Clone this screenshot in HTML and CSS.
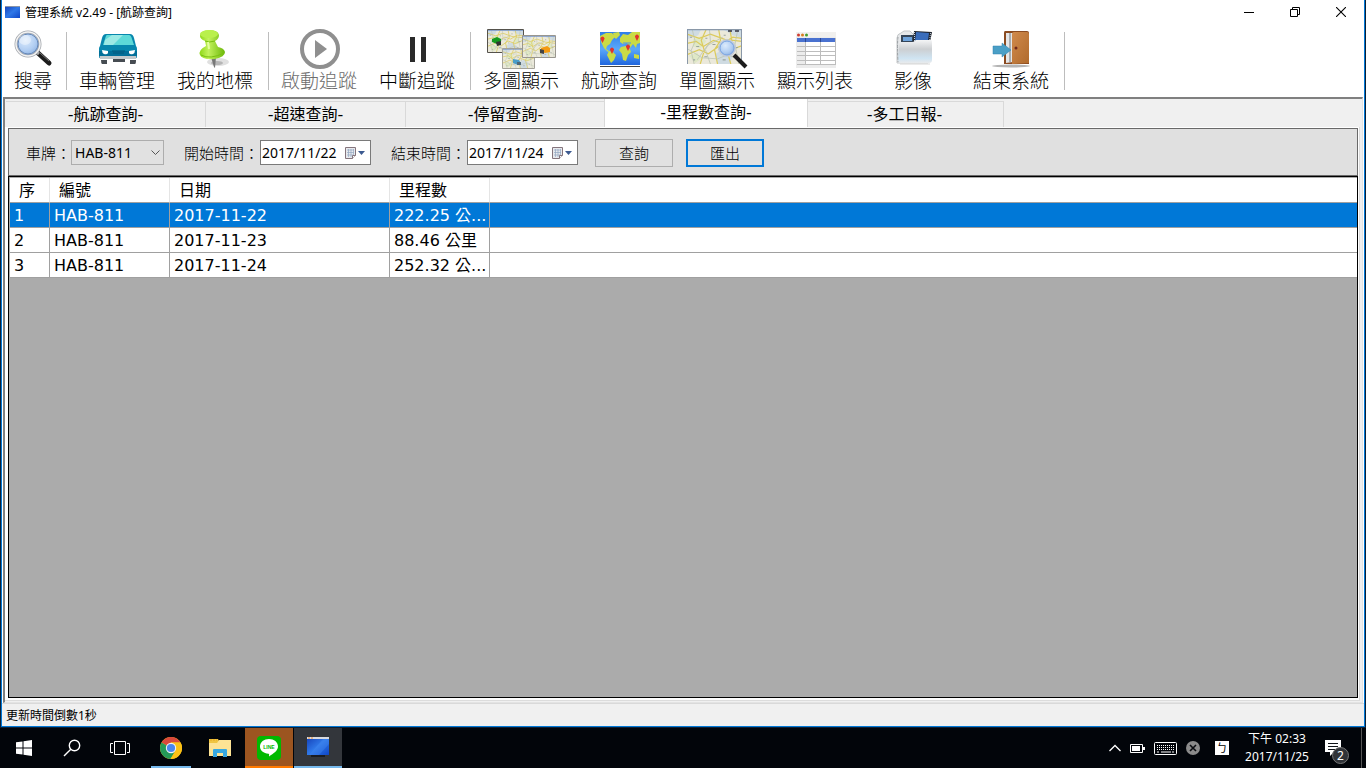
FILE: index.html
```html
<!DOCTYPE html>
<html lang="zh-TW">
<head>
    <meta charset="UTF-8">
    <meta name="viewport" content="width=device-width, initial-scale=1.0">
    <title>管理系統 v2.49 - [航跡查詢]</title>
    <link rel="stylesheet" href="styles.css">
</head>
<body>
    <!-- 共用圖形 -->
    <svg class="defs" width="0" height="0" aria-hidden="true">
        <defs>
            <linearGradient id="blueScreen" x1="0" y1="0" x2="1" y2="1">
                <stop offset="0" stop-color="#1440b8"/>
                <stop offset="0.5" stop-color="#2f78e8"/>
                <stop offset="1" stop-color="#0e46c8"/>
            </linearGradient>
            <radialGradient id="lens" cx="0.4" cy="0.35" r="0.7">
                <stop offset="0" stop-color="#dcebfc"/>
                <stop offset="0.6" stop-color="#b0cdf2"/>
                <stop offset="1" stop-color="#86abdc"/>
            </radialGradient>
            <linearGradient id="pin" x1="0" y1="0" x2="1" y2="0">
                <stop offset="0" stop-color="#8fd818"/>
                <stop offset="0.35" stop-color="#c2f25c"/>
                <stop offset="1" stop-color="#6cb80a"/>
            </linearGradient>
            <linearGradient id="sea" x1="0" y1="0" x2="0" y2="1">
                <stop offset="0" stop-color="#2f7ee8"/>
                <stop offset="0.5" stop-color="#5aa8fa"/>
                <stop offset="1" stop-color="#1c62dc"/>
            </linearGradient>
            <linearGradient id="folder" x1="0" y1="0" x2="0" y2="1">
                <stop offset="0" stop-color="#f4f5f6"/>
                <stop offset="0.4" stop-color="#cccfd2"/>
                <stop offset="0.8" stop-color="#cfe4f2"/>
                <stop offset="1" stop-color="#e8eaec"/>
            </linearGradient>
            <linearGradient id="door" x1="0" y1="0" x2="1" y2="1">
                <stop offset="0" stop-color="#d08a4c"/>
                <stop offset="1" stop-color="#b06a2c"/>
            </linearGradient>
            <symbol id="map" viewBox="0 0 54 34" preserveAspectRatio="none">
                <rect width="54" height="34" fill="#ebe9db"/>
                <path d="M0 0h14l-3 6-11 4zM35 0h19v9l-9-3zM28 24l9-5 8 6-3 9H30z" fill="#cfdbe2"/>
                <path d="M6 10l8-3 5 5-6 7-7-2zM40 12l8 1-2 9-7-3zM2 26l8-3 4 6-6 4z" fill="#dfe8c6"/>
                <path d="M0 14l9-2 7 5 10-6 9 3 10-6 9 1M0 25l12-5 9 4 10-7 11 4 12-5M13 34l4-13-3-10 5-11M30 34l-3-14 6-9-2-11M43 34l-4-14 5-9-2-11M0 5l12 4 11-4 14 5 17 2" fill="none" stroke="#dccb5c" stroke-width="1.2"/>
                <path d="M0 19l15 9 15 1 10-4 14 6M5 0l3 12-4 9 3 13M22 0l1 12-5 8 5 14M50 0l-3 15 4 19M10 30l10-14 15-8" fill="none" stroke="#bdc5b2" stroke-width="0.8"/>
                <path d="M3 8h2M9 17h3M18 9h2M25 15h3M36 6h2M47 18h3M35 30h3M17 27h3M31 20h2M6 30h2M45 27h2" stroke="#9aa49e"/>
                <path d="M0 .5h54" stroke="#7896c8" stroke-width="1.5"/>
            </symbol>
            <symbol id="calendar" viewBox="0 0 20 12">
                <path d="M.5.5h10v8l-3 3h-7z" fill="#e8eaee" stroke="#84747c"/>
                <path d="M2 3h7M2 5.5h7M2 8h6M3.5 2v8M6 2v8M8.5 2v6" stroke="#93a7c2" stroke-width="0.7"/>
                <path d="M7.500 11.500v-3h3" fill="#fff" stroke="#84747c"/>
                <path d="M13 4h7l-3.500 4z" fill="#3c5a90"/>
            </symbol>
        </defs>
    </svg>

    <main class="window">
        <header class="titlebar">
            <svg class="title-icon" width="15" height="12" viewBox="0 0 15 12" aria-hidden="true">
                <rect width="15" height="12" fill="url(#blueScreen)"/>
                <path d="M0 .5h15" stroke="#8a94a8"/>
            </svg>
            <h1 class="title">管理系統 v2.49 - [航跡查詢]</h1>
            <div class="window-controls">
                <button type="button" aria-label="最小化">
                    <svg width="10" height="10" viewBox="0 0 10 10"><path d="M0 5.500h10" stroke="#000"/></svg>
                </button>
                <button type="button" aria-label="還原">
                    <svg width="10" height="10" viewBox="0 0 10 10" fill="none" stroke="#000"><path d="M.5 2.500h7v7h-7zM2.500 2.500v-2h7v7h-2"/></svg>
                </button>
                <button type="button" aria-label="關閉">
                    <svg width="10" height="10" viewBox="0 0 10 10"><path d="M0 0l10 10M10 0L0 10" stroke="#000" stroke-width="1.1"/></svg>
                </button>
            </div>
        </header>

        <nav class="toolbar" aria-label="工具列">
            <button type="button" class="tool tool-small">
                <svg width="42" height="40" viewBox="0 0 42 40">
                    <path d="M26 24l11 10" stroke="#1c1c1c" stroke-width="5" stroke-linecap="round"/>
                    <path d="M28 24l9 8" stroke="#777" stroke-width="1"/>
                    <path d="M22 21l5 4" stroke="#aaa" stroke-width="3"/>
                    <circle cx="16" cy="15" r="12" fill="url(#lens)" stroke="#a4a8ae" stroke-width="3"/>
                    <circle cx="16" cy="15" r="12" fill="none" stroke="#f4f4f4" stroke-width="1.4"/>
                    <circle cx="16" cy="15" r="10" fill="none" stroke="#6688b8" stroke-width="1"/>
                    <ellipse cx="13" cy="11" rx="6" ry="5" fill="#fff" opacity="0.4"/>
                </svg>
                <span>搜尋</span>
            </button>
            <span class="divider"></span>
            <button type="button" class="tool">
                <svg width="42" height="40" viewBox="-2 0 42 40">
                    <path d="M3 31h6v4H4q-1-1-1-4zM32 31h6q0 4-1 4h-5zM15 30h12v3H15z" fill="#464c52"/>
                    <path d="M8 5h24q3 0 4 4l2 8q1 1 1 3v9H1v-9q0-2 1-3l2-8q1-4 4-4z" fill="#0787ad"/>
                    <path d="M1 22h38v5H1z" fill="#036f99"/>
                    <path d="M2 27h36q1 1 0 3H2q-1-2 0-3z" fill="#c4c9cc"/>
                    <path d="M9 6h22q2 0 3 4l2 6H5l2-6q1-4 2-4z" fill="#5dd9d8"/>
                    <path d="M14 6h11L15 16H6l1-5z" fill="#9beae5"/>
                    <path d="M4 21l6 1v2q-1 2-4 1-2-1-2-4zM37 21l-6 1v2q1 2 4 1 2-1 2-4z" fill="#fff"/>
                    <path d="M14 22h13M15 24h11" stroke="#04597c"/>
                </svg>
                <span>車輛管理</span>
            </button>
            <button type="button" class="tool">
                <svg width="42" height="40" viewBox="3 0 42 40">
                    <ellipse cx="27" cy="33" rx="11" ry="4" fill="#e0e0e0"/>
                    <ellipse cx="26" cy="34" rx="6" ry="2" fill="#b6b6b6"/>
                    <path d="M20 28l3 10 1 1 1-11z" fill="#777"/>
                    <path d="M9 26q-2-5 6-9l-1-5q-5-2-5-5 0-5 9-6 9 0 10 5 0 4-4 6l3 6q6 1 7 5 0 5-10 7-13 1-15-4z" fill="url(#pin)"/>
                    <ellipse cx="18" cy="5" rx="9" ry="4" fill="#b9f04c"/>
                    <path d="M14 12q4 2 10 0M10 26q9 5 23-2" fill="none" stroke="#78c010"/>
                    <path d="M17 13l1 7" stroke="#e4ff9e" stroke-width="2"/>
                </svg>
                <span>我的地標</span>
            </button>
            <span class="divider"></span>
            <button type="button" class="tool" disabled>
                <svg width="42" height="40" viewBox="-1 0 42 40">
                    <circle cx="21" cy="20" r="18" fill="none" stroke="#8f8f8f" stroke-width="4"/>
                    <path d="M16 11l12 9-12 9z" fill="#8f8f8f"/>
                </svg>
                <span>啟動追蹤</span>
            </button>
            <button type="button" class="tool">
                <svg width="42" height="40" viewBox="-1 0 42 40">
                    <path d="M13 8h5v25h-5zM24 8h5v25h-5z" fill="#2a2a2a"/>
                </svg>
                <span>中斷追蹤</span>
            </button>
            <span class="divider"></span>
            <button type="button" class="tool">
                <svg width="72" height="40" viewBox="-2 0 72 40">
                    <use href="#map" x="1" y="1" width="35" height="22"/>
                    <path d="M.5.5h36v23H.5z" fill="none" stroke="#55524c"/>
                    <use href="#map" x="16" y="20" width="31" height="19"/>
                    <path d="M15.500 19.500h32v20h-32z" fill="none" stroke="#a4a29a"/>
                    <use href="#map" x="36" y="7" width="33" height="21"/>
                    <path d="M35.500 6.500h33v22h-33z" fill="none" stroke="#99968f"/>
                    <path d="M5 10l5-2 4 2v4l-4 1-5-2z" fill="#149a20"/>
                    <path d="M9 13l5-1v4l-4 1z" fill="#333"/>
                    <path d="M54 19l6-2 3 2v4l-5 1-4-2z" fill="#f39a12"/>
                    <path d="M53 20l4 1v4l-4-1z" fill="#444"/>
                    <path d="M26 30l6 1 2 3-3 2-5-2z" fill="#4a9cc8"/>
                    <path d="M30 33h4v3h-4z" fill="#506878"/>
                </svg>
                <span>多圖顯示</span>
            </button>
            <button type="button" class="tool">
                <svg width="42" height="40" viewBox="-2 0 42 40">
                    <path d="M0 3h40v34H0z" fill="url(#sea)"/>
                    <path d="M0 36.500h40" stroke="#fff"/>
                    <path d="M0 37.500h40" stroke="#444"/>
                    <path d="M0 7l6-3h6l3 4-3 3-2 4-3 2-1 3 3 2-1 1-4-4-3-6zM13 4l6-1 1 3-4 4-2-2zM9 22l4 1 3 3-2 5-3 3-2-4-2-4zM20 9l3-4 5 1 4-3h8v11l-3 1-1 4-3-4-3 4-3-5-4 1-3-2zM21 18l5-1 4 3 1 3-3 3-2 6-3-1-1-6-3-4zM34 25l5 1v4l-5-1z" fill="#cadb45"/>
                    <path d="M23 14h8M25 16h5" stroke="#4a94ea"/>
                    <path d="M2.500 14l-1.500-3a2 2 0 1 1 3 0zM12 25l-1.500-3a2 2 0 1 1 3 0zM28 22l-1.500-3a2 2 0 1 1 3 0zM37 12l-1.500-3a2 2 0 1 1 3 0z" fill="#e2342c"/>
                </svg>
                <span>航跡查詢</span>
            </button>
            <button type="button" class="tool">
                <svg width="61" height="40" viewBox="0 0 61 40">
                    <use href="#map" y="0" width="55" height="35"/>
                    <path d="M.5 35V.5h54V35" fill="none" stroke="#8a98a8"/>
                    <path d="M41 2h4M48 2h4" stroke="#334" stroke-width="1.500"/>
                    <path d="M47 26l12 12" stroke="#1c1c1c" stroke-width="4"/>
                    <circle cx="40" cy="19" r="8" fill="url(#lens)" stroke="#c4ccd8" stroke-width="2"/>
                    <circle cx="40" cy="19" r="7" fill="none" stroke="#78a4e4"/>
                </svg>
                <span>單圖顯示</span>
            </button>
            <button type="button" class="tool">
                <svg width="42" height="40" viewBox="-2 0 42 40">
                    <path d="M0 3h40v36H0z" fill="#ececec"/>
                    <path d="M0 3h40v5H0z" fill="#f1f0ee"/>
                    <circle cx="2.500" cy="6" r="1.500" fill="#d03c30"/>
                    <circle cx="6.500" cy="6" r="1.500" fill="#d87c20"/>
                    <circle cx="10.500" cy="6" r="1.500" fill="#48a030"/>
                    <path d="M1 9h38v4H1z" fill="#4a72d0"/>
                    <path d="M9 13h30v22H9z" fill="#fff"/>
                    <path d="M1 17.500h38M1 22.500h38M1 26.500h38M1 31.500h38M1 35.500h38M9.500 13v22M24.500 13v22M39.500 9v27" stroke="#bdbdbd"/>
                    <path d="M9.500 9v4M24.500 9v4" stroke="#2c4a98"/>
                </svg>
                <span>顯示列表</span>
            </button>
            <button type="button" class="tool">
                <svg width="42" height="40" viewBox="-2 0 42 40">
                    <path d="M3 34V9q0-4 4-5l3-2h6l4 4h14v28z" fill="#e6e8ea" stroke="#c4c7c9"/>
                    <path d="M7 6h13v7H7z" fill="#354558"/>
                    <path d="M9 8h9v4H9z" fill="#6fa4dc"/>
                    <path d="M20 2l18 1-2 10H19z" fill="#1c222c"/>
                    <path d="M22 3l13 1-1 8H21z" fill="#3a6dbb"/>
                    <path d="M20.500 3v10M36.500 4l-1 9" stroke="#c8d0d8" stroke-dasharray="1 1"/>
                    <path d="M5 13h14l3-2h15q1 0 1 2v18q0 3-3 3H6q-2 0-2-3z" fill="url(#folder)"/>
                    <path d="M4 8q-1 9 0 25" fill="none" stroke="#9a9fa3" stroke-dasharray="3 1"/>
                    <path d="M6 35h30" stroke="#d8d8d8"/>
                </svg>
                <span>影像</span>
            </button>
            <button type="button" class="tool">
                <svg width="42" height="40" viewBox="-2 0 42 40">
                    <ellipse cx="19" cy="37" rx="19" ry="1.500" fill="#b4b4b4"/>
                    <path d="M15 2h20q2 0 2 2v31H12V4q0-2 1-2z" fill="#8a4a20"/>
                    <path d="M14 4h7v29l-7 1z" fill="#e4e6e8"/>
                    <path d="M17 4h2v29h-2z" fill="#a8acb0"/>
                    <path d="M20 5q0-2 2-2h13q2 0 2 2v29l-17 1z" fill="url(#door)"/>
                    <circle cx="24" cy="19" r="1.500" fill="#70281c"/>
                    <path d="M1 17h9v-3l9 7-9 7v-3H1z" fill="#4a9fc6" stroke="#3182ac" stroke-width="0.500"/>
                </svg>
                <span>結束系統</span>
            </button>
            <span class="divider"></span>
        </nav>

        <section class="mdi">
            <div class="tabs" role="tablist">
                <button type="button" class="tab" role="tab">-航跡查詢-</button>
                <button type="button" class="tab" role="tab">-超速查詢-</button>
                <button type="button" class="tab" role="tab">-停留查詢-</button>
                <button type="button" class="tab active" role="tab" aria-selected="true">-里程數查詢-</button>
                <button type="button" class="tab" role="tab">-多工日報-</button>
            </div>

            <div class="tab-page">
                <form class="filters">
                    <label for="plate">車牌：</label>
                    <div class="field field-select">
                        <select id="plate">
                            <option>HAB-811</option>
                        </select>
                        <svg class="field-icon" width="9" height="6" viewBox="0 0 9 6"><path d="M.5.5l4 4 4-4" fill="none" stroke="#555"/></svg>
                    </div>
                    <label for="startDate">開始時間：</label>
                    <div class="field">
                        <input type="text" id="startDate" value="2017/11/22">
                        <svg class="field-icon" width="20" height="12"><use href="#calendar"/></svg>
                    </div>
                    <label for="endDate">結束時間：</label>
                    <div class="field">
                        <input type="text" id="endDate" value="2017/11/24">
                        <svg class="field-icon" width="20" height="12"><use href="#calendar"/></svg>
                    </div>
                    <div class="actions">
                        <button type="button" class="btn">查詢</button>
                        <button type="button" class="btn btn-focus">匯出</button>
                    </div>
                </form>

                <div class="grid">
                    <table>
                        <colgroup>
                            <col class="col-no">
                            <col class="col-id">
                            <col class="col-date">
                            <col class="col-km">
                            <col>
                        </colgroup>
                        <thead>
                            <tr><th>序</th><th>編號</th><th>日期</th><th>里程數</th><th></th></tr>
                        </thead>
                        <tbody>
                            <tr class="selected"><td>1</td><td>HAB-811</td><td>2017-11-22</td><td>222.25 公...</td><td></td></tr>
                            <tr><td>2</td><td>HAB-811</td><td>2017-11-23</td><td>88.46 公里</td><td></td></tr>
                            <tr><td>3</td><td>HAB-811</td><td>2017-11-24</td><td>252.32 公...</td><td></td></tr>
                        </tbody>
                    </table>
                </div>
            </div>
        </section>

        <footer class="statusbar">更新時間倒數1秒</footer>
    </main>

    <!-- 工作列 -->
    <div class="taskbar">
        <button type="button" class="task" aria-label="開始">
            <svg width="16" height="16" viewBox="0 0 16 16" fill="#fff"><path d="M0 2.300l6.500-.9v6.100H0zM7.500 1.200L16 0v7.500H7.500zM0 8.500h6.500v6.100L0 13.700zM7.500 8.500H16V16l-8.500-1.200z"/></svg>
        </button>
        <button type="button" class="task" aria-label="搜尋">
            <svg width="18" height="18" viewBox="0 0 18 18" fill="none" stroke="#fff" stroke-width="1.400"><circle cx="11.500" cy="6.500" r="5.200"/><path d="M7.800 10.200L1 17"/></svg>
        </button>
        <button type="button" class="task" aria-label="工作檢視">
            <svg width="20" height="14" viewBox="0 0 20 14" fill="none" stroke="#fff"><path d="M4.500.5h11v13h-11zM3 2.500H.5v9H3M17 2.500h2.500v9H17"/></svg>
        </button>
        <div class="pinned">
            <button type="button" class="task open" aria-label="Chrome">
                <svg width="22" height="22" viewBox="0 0 22 22">
                    <circle cx="11" cy="11" r="11" fill="#fbc116"/>
                    <path d="M11 11L1.500 5.500A11 11 0 0 1 20.500 5.500H11z" fill="#d9483b"/>
                    <path d="M1.500 5.500A11 11 0 0 0 10.500 22l5-8.500L11 11z" fill="#249a58"/>
                    <path d="M11 5.500h9.500A11 11 0 0 1 10.500 22l5.300-8.500z" fill="#fbc116"/>
                    <circle cx="11" cy="11" r="5.200" fill="#f2f2f2"/>
                    <circle cx="11" cy="11" r="4.100" fill="#4a86ee"/>
                </svg>
            </button>
            <button type="button" class="task" aria-label="檔案總管">
                <svg width="22" height="18" viewBox="0 0 22 18">
                    <path d="M0 0h9l1 2h11v15H0z" fill="#f0c541"/>
                    <path d="M1 1h7" stroke="#e8a820" stroke-dasharray="2 1"/>
                    <path d="M0 4h8l2-3h12v16H0z" fill="#fde394"/>
                    <path d="M4 18v-7q0-1 1-1h12q1 0 1 1v7h-4v-4H8v4z" fill="#38a8e0"/>
                </svg>
            </button>
            <button type="button" class="task line" aria-label="LINE">
                <svg width="24" height="24" viewBox="0 0 24 24">
                    <rect width="24" height="24" rx="4" fill="#00b900"/>
                    <path d="M12 3c5 0 9 3 9 7.500 0 4-4.500 7-9 10 0-1.500.5-2.500-.5-2.800C6.500 17.300 3 14.500 3 10.500 3 6 7 3 12 3z" fill="#fff"/>
                    <text x="12" y="13" text-anchor="middle" class="line-text">LINE</text>
                </svg>
            </button>
            <button type="button" class="task current" aria-label="管理系統">
                <svg width="22" height="22" viewBox="0 0 22 22">
                    <path d="M4 19h14" stroke="#1a1c22" stroke-width="2"/>
                    <path d="M0 0h22v18H0z" fill="url(#blueScreen)"/>
                    <path d="M2 18L16 2h6v5L12 18z" fill="#4a90f4" opacity="0.350"/>
                    <path d="M0 1h22" stroke="#d8dadf" stroke-width="2"/>
                    <path d="M1 1h6" stroke="#f08c30" stroke-dasharray="2 1"/>
                </svg>
            </button>
        </div>

        <div class="tray">
            <svg width="12" height="8" viewBox="0 0 12 8"><path d="M.5 7L6 1.500 11.500 7" fill="none" stroke="#fff" stroke-width="1.300"/></svg>
            <svg width="15" height="9" viewBox="0 0 15 9"><path d="M.5.5h12v8H.5z" fill="none" stroke="#fff"/><path d="M2 2h8v5H2zM13 3h2v3h-2z" fill="#fff"/></svg>
            <svg width="23" height="13" viewBox="0 0 23 13">
                <rect x="0.500" y="0.500" width="22" height="12" rx="1" fill="none" stroke="#fff"/>
                <path d="M3 3.500h17M3 5.500h17M3 7.500h17" stroke="#fff" stroke-dasharray="1 1"/>
                <path d="M3 10h2M7 10h10M18 10h2" stroke="#fff"/>
            </svg>
            <svg width="14" height="14" viewBox="0 0 14 14"><circle cx="7" cy="7" r="7" fill="#8b8b8b"/><path d="M4 4l6 6M10 4l-6 6" stroke="#0a0c10" stroke-width="1.600"/></svg>
            <span class="ime">ㄅ</span>
            <time class="clock" datetime="2017-11-25T14:33">下午 02:33<br>2017/11/25</time>
            <div class="notice">
                <svg width="16" height="16" viewBox="0 0 16 16"><path d="M0 0h16v12H9l-4 4v-4H0z" fill="#fff"/><path d="M3 3.500h10M3 6.500h10M3 9.500h7" stroke="#10141a"/></svg>
                <span class="badge">2</span>
            </div>
            <span class="show-desktop"></span>
        </div>
    </div>
</body>
</html>
```
FILE: styles.css
```css
* {
    margin: 0;
    padding: 0;
    box-sizing: border-box;
}

body {
    font-family: "Noto Sans", "Noto Sans CJK TC", sans-serif;
    font-size: 12px;
    color: #000;
    background: #0b2038;
    height: 100vh;
    display: flex;
    flex-direction: column;
    overflow: hidden;
}

button {
    font: inherit;
    color: inherit;
    background: none;
    border: none;
}

svg {
    display: block;
    flex-shrink: 0;
}

.defs {
    position: absolute;
}

.window {
    flex: 1;
    min-height: 0;
    margin: 0 1px 1px;
    border: 1px solid #0078d7;
    border-top: none;
    background: #fff;
    display: flex;
    flex-direction: column;
}

/* 標題列 */
.titlebar {
    display: flex;
    align-items: center;
    height: 24px;
    padding-left: 3px;
}

.title {
    flex: 1;
    margin-left: 5px;
    font-size: 12px;
    font-weight: normal;
    line-height: 24px;
    padding-top: 1px;
}

.window-controls {
    display: flex;
}

.window-controls button {
    width: 46px;
    height: 22px;
    display: flex;
    align-items: center;
    justify-content: center;
}

/* 工具列 */
.toolbar {
    display: flex;
    height: 73px;
    padding: 5px 2px 0;
}

.tool {
    width: 98px;
    display: flex;
    flex-direction: column;
    align-items: center;
    font-family: "Noto Sans CJK TC", sans-serif;
    font-size: 19px;
    font-weight: 300;
    line-height: 22px;
    white-space: nowrap;
}

.tool-small {
    width: 58px;
}

.tool:disabled {
    color: #6d6d6d;
}

.divider {
    width: 1px;
    height: 58px;
    margin: 3px 1px 0 4px;
    background: #bdbdbd;
}

/* 子視窗 */
.mdi {
    flex: 1;
    min-height: 0;
    margin: 0 1px;
    padding: 0 2px 1px 0;
    border-style: solid;
    border-width: 2px 1px 1px 2px;
    border-color: #808080 #e3e3e3 #e3e3e3 #808080;
    background: #f0f0f0;
    display: flex;
    flex-direction: column;
}

.tabs {
    display: flex;
    align-items: flex-end;
    height: 28px;
    padding-left: 1px;
}

.tab {
    width: 200px;
    height: 26px;
    border: 1px solid #d9d9d9;
    border-width: 1px 1px 0 0;
    font-family: "DejaVu Sans", "Noto Sans CJK TC", sans-serif;
    font-size: 16px;
    line-height: 24px;
}

.tab:last-child {
    width: 198px;
}

.tab.active {
    width: 204px;
    height: 28px;
    margin: 0 -2px;
    background: #fff;
    border-color: #d9d9d9;
    border-width: 0 1px;
    z-index: 1;
}

.tab-page {
    flex: 1;
    min-height: 0;
    padding: 1px 1px 2px 3px;
    background: #fff;
    border: 1px solid #dcdcdc;
    border-width: 0 1px 1px 0;
    display: flex;
    flex-direction: column;
}

.filters {
    display: flex;
    align-items: center;
    height: 48px;
    padding: 2px 0 0 17px;
    background: #e0e0e0;
    border: 1px solid #696969;
}

.filters label {
    font-family: "Noto Sans CJK TC", sans-serif;
    font-size: 15px;
    font-weight: 300;
    line-height: 24px;
}

.field {
    position: relative;
    margin: 0 20px 2px 1px;
}

.field select,
.field input {
    display: block;
    width: 111px;
    height: 25px;
    padding-left: 1px;
    border: 1px solid #7a7a7a;
    border-radius: 0;
    background: #fff;
    font-family: "Noto Sans", sans-serif;
    font-size: 14px;
    color: #000;
    appearance: none;
}

.field select {
    width: 93px;
    padding-left: 3px;
    border-color: #adadad;
    background: #e1e1e1;
}

.field-select {
    margin-left: 0;
}

.field-icon {
    position: absolute;
    right: 6px;
    top: 7px;
    pointer-events: none;
}

.field-select .field-icon {
    right: 4px;
    top: 10px;
}

.actions {
    display: flex;
    gap: 13px;
    margin-left: -3px;
}

.btn {
    width: 78px;
    height: 28px;
    background: #e1e1e1;
    border: 1px solid #adadad;
    font-family: "Noto Sans CJK TC", sans-serif;
    font-size: 15px;
    font-weight: 300;
    line-height: 24px;
}

.btn-focus {
    border: 2px solid #0078d7;
}

/* 資料表 */
.grid {
    flex: 1;
    min-height: 0;
    padding: 1px 0 0 1px;
    background: #ababab;
    border: 1px solid #000;
}

table {
    width: 100%;
    table-layout: fixed;
    border-spacing: 0;
    background: #fff;
    font-family: "DejaVu Sans", "Noto Sans CJK TC", sans-serif;
    font-size: 16px;
}

.col-no { width: 40px; }
.col-id { width: 120px; }
.col-date { width: 220px; }
.col-km { width: 100px; }

th,
td {
    height: 25px;
    padding: 2px 4px 0;
    border-right: 1px solid #a0a0a0;
    border-bottom: 1px solid #a0a0a0;
    font-weight: normal;
    line-height: 22px;
    text-align: left;
    white-space: nowrap;
    overflow: hidden;
}

th {
    padding-left: 9px;
    border-right-color: #e5e5e5;
}

th:last-child,
td:last-child {
    border-right: none;
}

.selected {
    background: #0078d7;
    color: #fff;
}

.statusbar {
    height: 23px;
    padding-left: 4px;
    background: #f0f0f0;
    border-top: 1px solid #d9d9d9;
    line-height: 24px;
}

/* 工作列 */
.taskbar {
    display: flex;
    height: 40px;
    background: #02050a;
    color: #fff;
}

.task {
    width: 48px;
    height: 40px;
    display: flex;
    align-items: center;
    justify-content: center;
}

.pinned {
    display: flex;
    gap: 1px;
    margin-left: 3px;
}

.open {
    background: linear-gradient(#76b9ed, #76b9ed) center bottom / 40px 2px no-repeat;
}

.line {
    background: #9c5520;
    box-shadow: inset 0 -2px #ff7a00;
}

.line-text {
    font: bold 5px "Liberation Sans", sans-serif;
    fill: #00b900;
}

.current {
    background: #33363b;
    box-shadow: inset 0 -2px #76b9ed;
}

.tray {
    display: flex;
    align-items: center;
    margin-left: auto;
}

.tray > svg {
    margin-right: 9px;
}

.ime {
    width: 14px;
    height: 14px;
    margin: 0 14px 0 6px;
    background: #fff;
    color: #000;
    font-size: 11px;
    line-height: 14px;
    text-align: center;
}

.clock {
    width: 68px;
    line-height: 18px;
    text-align: center;
}

.notice {
    position: relative;
    margin: 0 20px 0 14px;
}

.badge {
    position: absolute;
    left: 7px;
    top: 7px;
    width: 17px;
    height: 17px;
    border: 1px solid #777;
    border-radius: 50%;
    background: #303338;
    font-size: 12px;
    line-height: 15px;
    text-align: center;
}

.show-desktop {
    width: 5px;
    height: 40px;
    border-left: 1px solid #555;
}
```
